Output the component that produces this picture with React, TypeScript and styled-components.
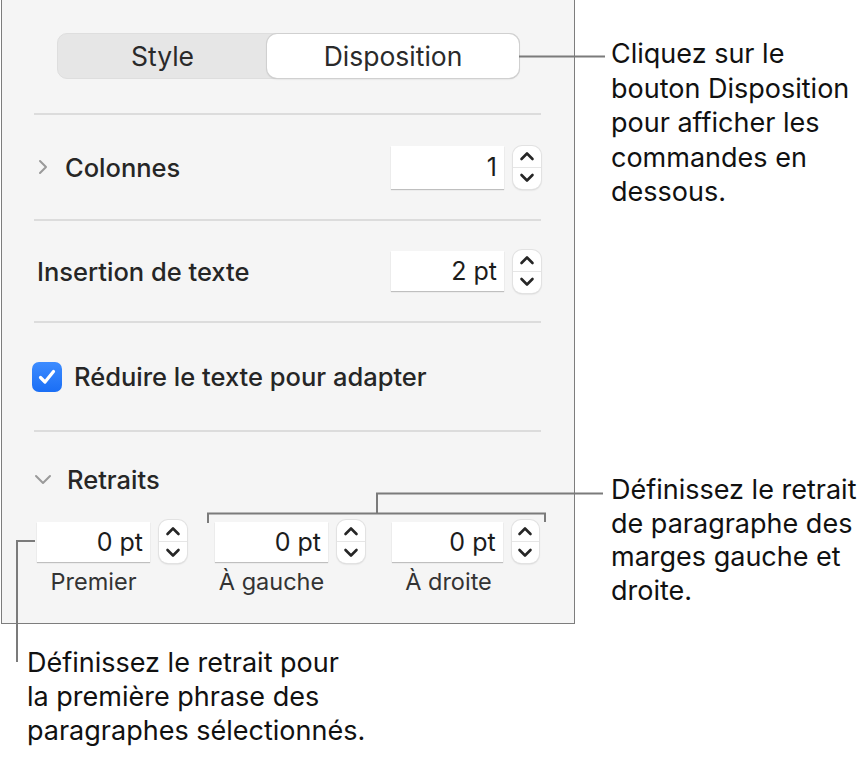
import styled, { createGlobalStyle } from "styled-components";

const GlobalStyle = createGlobalStyle`
    * {
        box-sizing: border-box;
    }
    body {
        margin: 0;
        background: #ffffff;
        font-family: Inter, "Noto Sans", sans-serif;
    }
`;

const Canvas = styled.div`
    position: relative;
    width: 867px;
    height: 758px;
    overflow: hidden;
    background: #ffffff;
`;

const Panel = styled.div`
    width: 574px;
    height: 624px;
    margin-left: 1px;
    padding: 33px 33px 0 32px;
    background: #f5f5f5;
    border: 1.5px solid #7d7d7d;
    border-top: none;
    display: flex;
    flex-direction: column;
    color: #262626;
`;

const Segmented = styled.div`
    align-self: center;
    margin-left: 2px;
    width: 463px;
    height: 46px;
    display: flex;
    background: #e6e6e6;
    border: 1px solid #dedede;
    border-radius: 10px;
`;

const Segment = styled.div<{ $active?: boolean }>`
    flex: ${props => (props.$active ? "0 0 252px" : "1")};
    display: flex;
    align-items: center;
    justify-content: center;
    font-size: 26.5px;
    color: #2a2a2a;
    border-radius: 10px;
    background: ${props => (props.$active ? "#ffffff" : "transparent")};
    box-shadow: ${props => (props.$active ? "0 0 0 1px #d0d0d0, 0 1px 2px rgba(0,0,0,0.18)" : "none")};
`;

const Divider = styled.div<{ $top?: number }>`
    height: 2px;
    background: #dcdcdc;
    margin-top: ${props => props.$top ?? 0}px;
    flex-shrink: 0;
`;

const Row = styled.div<{ $h: number; $top?: number }>`
    height: ${props => props.$h}px;
    margin-top: ${props => props.$top ?? 0}px;
    display: flex;
    align-items: center;
    gap: 12px;
    flex-shrink: 0;
`;

const Label = styled.span<{ $indent?: number }>`
    flex: 1;
    font-size: 25.5px;
    font-weight: 500;
    padding-left: ${props => props.$indent ?? 0}px;
`;

const Disclosure = styled.svg<{ $left?: number }>`
    flex-shrink: 0;
    margin-left: ${props => props.$left ?? 0}px;
`;

const Field = styled.div`
    display: flex;
    align-items: center;
    gap: 9px;
`;

const NumberBox = styled.div<{ $h?: number }>`
    width: 113px;
    height: ${props => props.$h ?? 43}px;
    background: #ffffff;
    box-shadow: 0 1px 1px rgba(0, 0, 0, 0.22);
    display: flex;
    align-items: center;
    justify-content: flex-end;
    padding-right: 7px;
    font-size: 25px;
    color: #1c1c1c;
`;

const StepperBox = styled.div`
    width: 28px;
    height: 43px;
    background: #ffffff;
    border-radius: 9px;
    box-shadow: 0 0 0 1px #e2e2e2, 0 1px 2px rgba(0, 0, 0, 0.2);
    display: flex;
    flex-direction: column;
    overflow: hidden;
`;

const StepHalf = styled.div<{ $top?: boolean }>`
    flex: 1;
    display: flex;
    align-items: center;
    justify-content: center;
    border-bottom: ${props => (props.$top ? "1px solid #e6e6e6" : "none")};
`;

const Check = styled.div`
    width: 30px;
    height: 30px;
    border-radius: 7px;
    background: linear-gradient(#3d8cff, #1a6ef5);
    display: flex;
    align-items: center;
    justify-content: center;
    flex-shrink: 0;
    margin-left: -2px;
`;

const IndentGrid = styled.div`
    margin-top: 18px;
    display: flex;
`;

const IndentCell = styled.div<{ $w: number }>`
    width: ${props => props.$w}px;
    display: flex;
    flex-direction: column;
    padding-left: 3px;
`;

const Caption = styled.div`
    font-size: 23.5px;
    color: #333;
    width: 113px;
    text-align: center;
    margin-top: 4px;
`;

const Leaders = styled.svg`
    position: absolute;
    left: 0;
    top: 0;
    pointer-events: none;
`;

const Callout = styled.div<{ $x: number; $y: number; $lh: number }>`
    position: absolute;
    left: ${props => props.$x}px;
    top: ${props => props.$y}px;
    font-size: 27px;
    line-height: ${props => props.$lh}px;
    color: #111;
    white-space: nowrap;
`;

function Stepper() {
    return (
        <StepperBox>
            <StepHalf $top>
                <svg width="16" height="10" viewBox="0 0 16 10">
                    <path d="M2.5 8 L8 2.5 L13.5 8" fill="none" stroke="#262626" strokeWidth="2.6" strokeLinecap="round" strokeLinejoin="round" />
                </svg>
            </StepHalf>
            <StepHalf>
                <svg width="16" height="10" viewBox="0 0 16 10">
                    <path d="M2.5 2 L8 7.5 L13.5 2" fill="none" stroke="#262626" strokeWidth="2.6" strokeLinecap="round" strokeLinejoin="round" />
                </svg>
            </StepHalf>
        </StepperBox>
    );
}

function NumberField({ value, h }: { value: string; h?: number }) {
    return (
        <Field>
            <NumberBox $h={h}>{value}</NumberBox>
            <Stepper />
        </Field>
    );
}

const indents = [
    { label: "Premier", w: 178 },
    { label: "À gauche", w: 177 },
    { label: "À droite", w: 150 },
];

function App() {
    return (
        <>
            <GlobalStyle />
            <Canvas>
                <Panel>
                    <Segmented>
                        <Segment>Style</Segment>
                        <Segment $active>Disposition</Segment>
                    </Segmented>
                    <Divider $top={34} />
                    <Row $h={104}>
                        <Disclosure width="12" height="16" viewBox="0 0 12 16" $left={3}>
                            <path d="M3 2 L9 8 L3 14" fill="none" stroke="#9a9a9a" strokeWidth="2" strokeLinecap="round" strokeLinejoin="round" />
                        </Disclosure>
                        <Label $indent={4}>Colonnes</Label>
                        <NumberField value="1" />
                    </Row>
                    <Divider />
                    <Row $h={100}>
                        <Label $indent={3}>Insertion de texte</Label>
                        <NumberField value="2 pt" h={40} />
                    </Row>
                    <Divider />
                    <Row $h={107}>
                        <Check>
                            <svg width="20" height="18" viewBox="0 0 20 18">
                                <path d="M3.5 9.5 L8 14 L16.5 3.5" fill="none" stroke="#fff" strokeWidth="3.2" strokeLinecap="round" strokeLinejoin="round" />
                            </svg>
                        </Check>
                        <Label>Réduire le texte pour adapter</Label>
                    </Row>
                    <Divider />
                    <Row $h={46} $top={24}>
                        <Disclosure width="18" height="12" viewBox="0 0 18 12">
                            <path d="M2 3 L9 10 L16 3" fill="none" stroke="#9a9a9a" strokeWidth="2" strokeLinecap="round" strokeLinejoin="round" />
                        </Disclosure>
                        <Label $indent={3}>Retraits</Label>
                    </Row>
                    <IndentGrid>
                        {indents.map(item => (
                            <IndentCell key={item.label} $w={item.w}>
                                <NumberField value="0 pt" h={40} />
                                <Caption>{item.label}</Caption>
                            </IndentCell>
                        ))}
                    </IndentGrid>
                </Panel>

                <Leaders width="867" height="758" viewBox="0 0 867 758">
                    <g fill="none" stroke="#7b7b7b" strokeWidth="2">
                        <path d="M519 56.5 H605" />
                        <path d="M208 523 V513.5 H545 V522" />
                        <path d="M377 513 V493.5 H603" />
                        <path d="M35 541 H17 V662" />
                    </g>
                </Leaders>

                <Callout $x={611} $y={37} $lh={34.5}>
                    Cliquez sur le
                    <br />
                    bouton Disposition
                    <br />
                    pour afficher les
                    <br />
                    commandes en
                    <br />
                    dessous.
                </Callout>
                <Callout $x={611} $y={473} $lh={33.5}>
                    Définissez le retrait
                    <br />
                    de paragraphe des
                    <br />
                    marges gauche et
                    <br />
                    droite.
                </Callout>
                <Callout $x={27} $y={646} $lh={34}>
                    Définissez le retrait pour
                    <br />
                    la première phrase des
                    <br />
                    paragraphes sélectionnés.
                </Callout>
            </Canvas>
        </>
    );
}

export default App;
